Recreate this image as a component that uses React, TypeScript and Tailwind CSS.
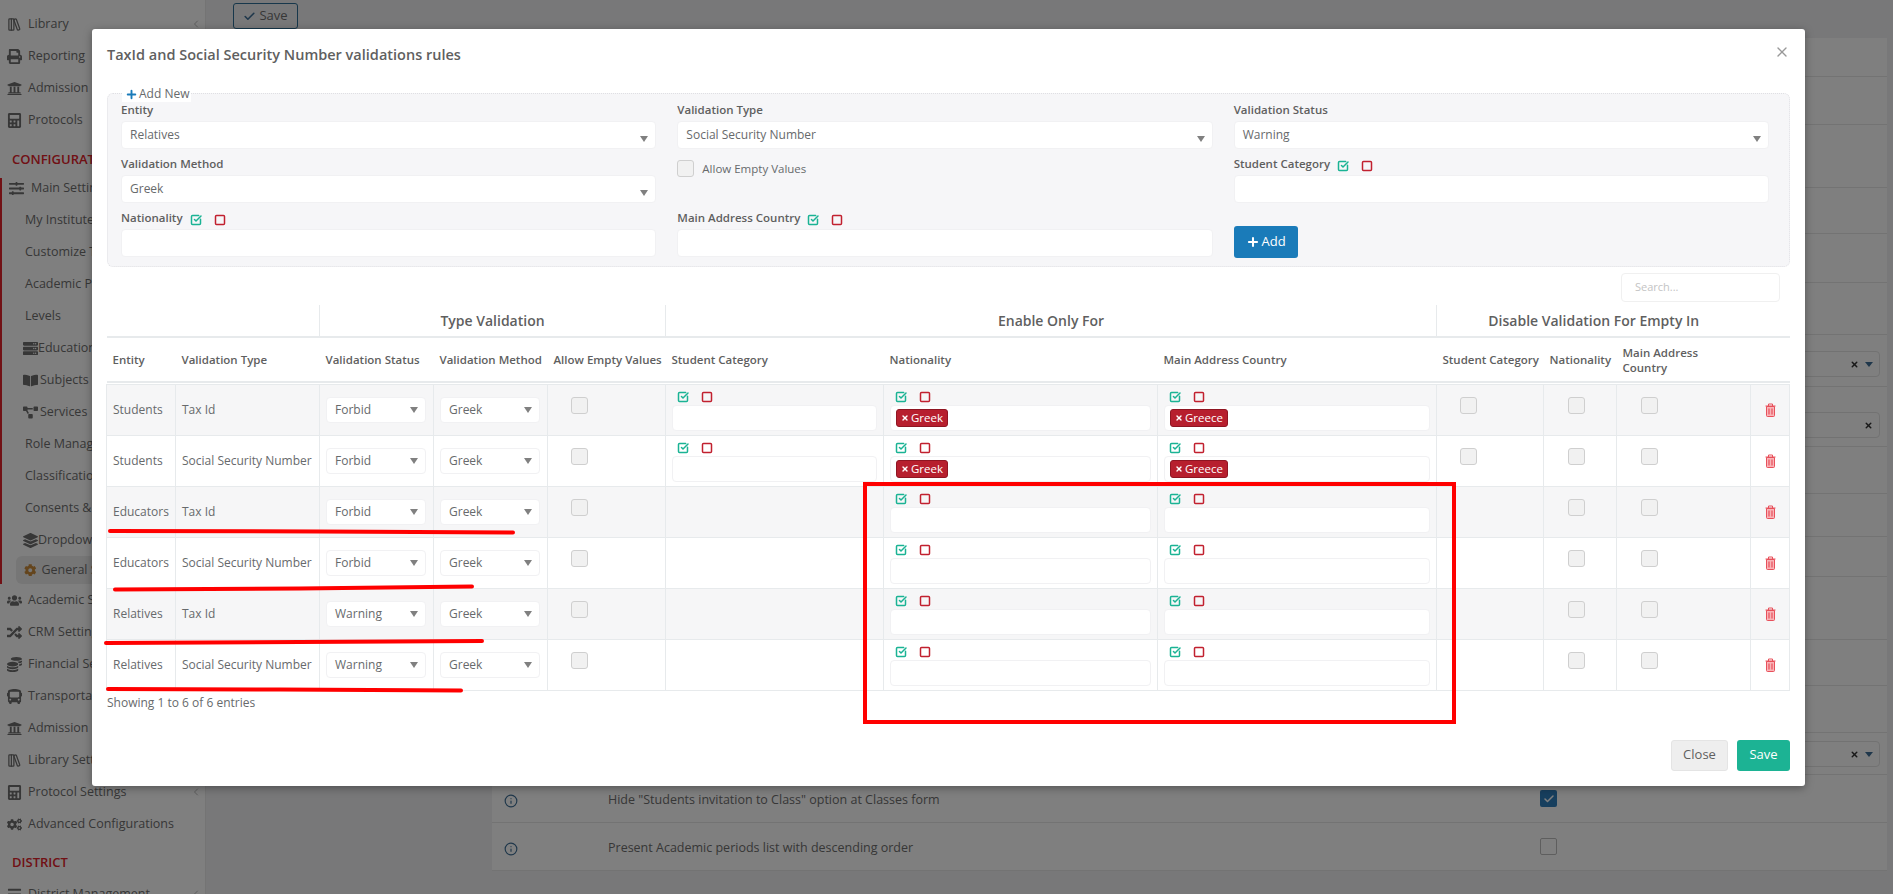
import type { ReactNode } from "react"
import { Check, Info, Plus, Square, SquareCheckBig, X, ChevronLeft } from "lucide-react"
import {
  FaBars,
  FaBookOpen,
  FaBus,
  FaCalculator,
  FaCog,
  FaCogs,
  FaCoins,
  FaLayerGroup,
  FaPrint,
  FaProjectDiagram,
  FaRandom,
  FaServer,
  FaSlidersH,
  FaUniversity,
  FaUsers,
} from "react-icons/fa"
import { LuLibraryBig } from "react-icons/lu"

type Rule = {
  entity: string
  type: string
  status: string
  category: boolean
  tags: boolean
}

const RULES: Rule[] = [
  { entity: "Students", type: "Tax Id", status: "Forbid", category: true, tags: true },
  { entity: "Students", type: "Social Security Number", status: "Forbid", category: true, tags: true },
  { entity: "Educators", type: "Tax Id", status: "Forbid", category: false, tags: false },
  { entity: "Educators", type: "Social Security Number", status: "Forbid", category: false, tags: false },
  { entity: "Relatives", type: "Tax Id", status: "Warning", category: false, tags: false },
  { entity: "Relatives", type: "Social Security Number", status: "Warning", category: false, tags: false },
]

// row heights of the settings page behind the dialog
const BACK_ROWS = [39, 48, 63, 46, 49, 52, 52, 60, 47, 43, 40, 63, 46, 47, 42, 48, 48]

function SelectBox({ value, className, caretClass = "" }: { value?: string; className: string; caretClass?: string }) {
  return (
    <div className={`flex items-center justify-between rounded-[4px] border border-[#f1f1f3] bg-white pl-[8px] pr-[7px] text-[12px] text-[#676a6c] ${className}`}>
      <span>{value}</span>
      <span className={`h-0 w-0 shrink-0 border-x-[4px] border-t-[6px] border-x-transparent border-t-[#808080] ${caretClass}`} />
    </div>
  )
}

function Toggles({ className = "" }: { className?: string }) {
  return (
    <span className={`flex items-start gap-[12px] ${className}`}>
      <SquareCheckBig size={12} strokeWidth={3} className="text-[#1ab394]" />
      <Square size={12} strokeWidth={3} className="text-[#c1202f]" />
    </span>
  )
}

function CheckBox({ className = "" }: { className?: string }) {
  return <span className={`block h-[17px] w-[17px] rounded-[3px] border border-[#cfcfcf] bg-[#f1f1f1] ${className}`} />
}

function Field({ label, toggles, children }: { label: string; toggles?: boolean; children: ReactNode }) {
  return (
    <div>
      <div className="flex h-[26px] items-end gap-[7px] pb-[4px] text-[11.5px] font-semibold leading-[14px] text-[#5f5f5f]">
        <span>{label}</span>
        {toggles && <Toggles className="mb-[-1px]" />}
      </div>
      {children}
    </div>
  )
}

function Tag({ text }: { text: string }) {
  return (
    <span className="ml-[5px] flex h-[18px] items-center gap-[2px] self-center rounded-[3px] border border-[#8f1522] bg-[#b71f2e] px-[4px] text-[11.5px] leading-none text-white">
      <X size={8} strokeWidth={4} />
      {text}
    </span>
  )
}

function TagInput({ tag }: { tag?: string }) {
  return <div className="flex h-[26px] rounded-[4px] border border-[#f1f1f3] bg-white">{tag && <Tag text={tag} />}</div>
}

function Trash() {
  return (
    <svg width="11" height="14" viewBox="0 0 11 14" className="mx-auto">
      <path d="M1.5 3.5h8v9a1 1 0 0 1-1 1h-6a1 1 0 0 1-1-1z" fill="#f9b4b8" stroke="#e8505b" />
      <path d="M0.5 3h10M3.5 3V1h4v2" fill="none" stroke="#e8505b" />
      <path d="M4 5.5v6M7 5.5v6" stroke="#e8505b" strokeWidth="1.2" />
    </svg>
  )
}

function SideItem({
  icon,
  label,
  className = "h-[32px] pl-[6px]",
  textClass = "ml-[6px]",
  chevron,
}: {
  icon?: ReactNode
  label: string
  className?: string
  textClass?: string
  chevron?: boolean
}) {
  return (
    <div className={`flex items-center whitespace-nowrap text-[12.5px] text-[#6e6e6e] ${className}`}>
      {icon && <span className="flex w-[16px] justify-center text-[15px]">{icon}</span>}
      <span className={textClass}>{label}</span>
      {chevron && <ChevronLeft size={12} className="ml-auto mr-[3px] text-[#bbbbbb]" />}
    </div>
  )
}

function Sidebar() {
  return (
    <aside className="h-full w-[206px] shrink-0 overflow-hidden border-r border-[#e8e8e8] bg-white pt-[8px]">
      <SideItem icon={<LuLibraryBig />} label="Library" chevron />
      <SideItem icon={<FaPrint />} label="Reporting" />
      <SideItem icon={<FaUniversity />} label="Admission" />
      <SideItem icon={<FaCalculator />} label="Protocols" />
      <div className="flex h-[42px] items-end pb-[9px] pl-[12px] text-[13px] font-semibold text-[#e2222a]">CONFIGURATION</div>
      <div className="border-l-2 border-[#e2222a]">
        <SideItem icon={<FaSlidersH />} label="Main Settings" className="h-[26px] pb-[6px] pl-[6px]" textClass="ml-[7px]" />
        <SideItem label="My Institute" className="h-[32px] pl-[23px]" textClass="" />
        <SideItem label="Customize Themes" className="h-[32px] pl-[23px]" textClass="" />
        <SideItem label="Academic Periods" className="h-[32px] pl-[23px]" textClass="" />
        <SideItem label="Levels" className="h-[32px] pl-[23px]" textClass="" />
        <SideItem icon={<FaServer />} label="Education" className="h-[32px] pl-[20px]" textClass="ml-[0px]" />
        <SideItem icon={<FaBookOpen />} label="Subjects" className="h-[32px] pl-[20px]" textClass="ml-[2px]" />
        <SideItem icon={<FaProjectDiagram />} label="Services" className="h-[32px] pl-[20px]" textClass="ml-[2px]" />
        <SideItem label="Role Management" className="h-[32px] pl-[23px]" textClass="" />
        <SideItem label="Classifications" className="h-[32px] pl-[23px]" textClass="" />
        <SideItem label="Consents & Terms" className="h-[32px] pl-[23px]" textClass="" />
        <SideItem icon={<FaLayerGroup />} label="Dropdown Lists" className="h-[32px] pl-[20px]" textClass="ml-[0px]" />
        <div className="ml-[14px] flex h-[28px] items-center gap-[5px] rounded-[6px] bg-[#ececec] pl-[8px] text-[12.5px] text-[#6e6e6e]">
          <FaCog className="text-[#c98a3a]" />
          General Settings
        </div>
      </div>
      <SideItem icon={<FaUsers />} label="Academic Settings" />
      <SideItem icon={<FaRandom />} label="CRM Settings" />
      <SideItem icon={<FaCoins />} label="Financial Settings" />
      <SideItem icon={<FaBus />} label="Transportation" />
      <SideItem icon={<FaUniversity />} label="Admission" />
      <SideItem icon={<LuLibraryBig />} label="Library Settings" />
      <SideItem icon={<FaCalculator />} label="Protocol Settings" chevron />
      <SideItem icon={<FaCogs />} label="Advanced Configurations" />
      <div className="flex h-[38px] items-end pb-[6px] pl-[12px] text-[13px] font-semibold text-[#e2222a]">DISTRICT</div>
      <SideItem icon={<FaBars />} label="District Management" chevron />
    </aside>
  )
}

function BackRow({ height, index }: { height: number; index: number }) {
  const text =
    index === 15 ? 'Hide "Students invitation to Class" option at Classes form' : index === 16 ? "Present Academic periods list with descending order" : ""
  const selectPad = index === 6 ? "mb-[9px]" : index === 7 ? "mb-[8px]" : index === 14 ? "mb-[7px]" : ""
  return (
    <div className="flex items-center border-b border-[#e6e6e6] bg-white text-[12.5px] text-[#6e6e6e]" style={{ height }}>
      {text && (
        <>
          <Info size={14} className="ml-[12px] mt-[4px] text-[#3f6f96]" />
          <span className="ml-[90px] mt-[4px] w-[932px]">{text}</span>
          {index === 15 ? (
            <span className="flex h-[17px] w-[17px] items-center justify-center rounded-[2px] bg-[#2f7fbd]">
              <Check size={12} strokeWidth={3} className="text-white" />
            </span>
          ) : (
            <span className="h-[17px] w-[17px] rounded-[2px] border border-[#bdbdbd]" />
          )}
        </>
      )}
      {selectPad && (
        <div className={`ml-auto mr-[7px] flex h-[26px] w-[220px] items-center justify-end gap-[6px] self-end rounded-[4px] border border-[#e4e4e4] pr-[6px] ${selectPad}`}>
          <X size={9} strokeWidth={4} className="text-[#333333]" />
          {index !== 7 && <span className="h-0 w-0 border-x-[4px] border-t-[5px] border-x-transparent border-t-[#3f6f96]" />}
        </div>
      )}
    </div>
  )
}

function BackPage() {
  return (
    <div className="flex h-full">
      <Sidebar />
      <main className="flex-1 bg-[#f0f1f3] pl-[27px]">
        <button className="mt-[3px] flex h-[26px] w-[65px] items-center justify-center gap-[3px] rounded-[3px] border border-[#2f6f96] text-[13px] text-[#6e6e6e]">
          <Check size={13} strokeWidth={3} className="text-[#3f6f96]" />
          Save
        </button>
        <div className="ml-[259px] mr-[6px] mt-[9px]">
          {BACK_ROWS.map((height, i) => (
            <BackRow key={i} height={height} index={i} />
          ))}
        </div>
      </main>
    </div>
  )
}

function RulesTable() {
  const cell = "border border-[#e7eaec] align-middle px-[6px]"
  const cols = ["w-[69px]", "w-[144px]", "w-[114px]", "w-[114px]", "w-[118px]", "w-[218px]", "w-[274px]", "w-[279px]", "w-[107px]", "w-[73px]", "w-[134px]", "w-[39px]"]
  return (
    <table className="ml-[-1px] mt-[3px] w-[1684px] table-fixed border-collapse text-[12px] text-[#676a6c]">
      <colgroup>
        {cols.map((c, i) => (
          <col key={i} className={c} />
        ))}
      </colgroup>
      <thead>
        <tr className="h-[32px] border-b-2 border-[#e7eaec] text-[14px] font-semibold text-[#5f5f5f]">
          <th colSpan={2} />
          <th colSpan={3} className="border-l border-[#e7eaec] font-semibold">Type Validation</th>
          <th colSpan={3} className="border-l border-[#e7eaec] font-semibold">Enable Only For</th>
          <th colSpan={3} className="border-l border-[#e7eaec] font-semibold">Disable Validation For Empty In</th>
          <th />
        </tr>
        <tr className="h-[45px] border-b-2 border-[#e7eaec] text-left text-[11.5px] text-[#5f5f5f] [&>th]:whitespace-nowrap [&>th]:px-[6px] [&>th]:font-semibold">
          <th>Entity</th>
          <th>Validation Type</th>
          <th>Validation Status</th>
          <th>Validation Method</th>
          <th>Allow Empty Values</th>
          <th>Student Category</th>
          <th>Nationality</th>
          <th>Main Address Country</th>
          <th>Student Category</th>
          <th>Nationality</th>
          <th className="leading-[15px]">
            Main Address
            <br />
            Country
          </th>
          <th />
        </tr>
        <tr className="h-[2px]" />
      </thead>
      <tbody>
        {RULES.map((r, i) => (
          <tr key={i} className={`h-[51px] ${i % 2 === 0 ? "bg-[#f6f6f7]" : "bg-white"}`}>
            <td className={cell}>{r.entity}</td>
            <td className={cell}>{r.type}</td>
            <td className={cell}>
              <SelectBox value={r.status} className="h-[26px] w-[100px]" />
            </td>
            <td className={cell}>
              <SelectBox value="Greek" className="h-[26px] w-[100px]" />
            </td>
            <td className={`${cell} align-top pl-[23px] pt-[12px]`}>
              <CheckBox />
            </td>
            <td className={`${cell} align-top pt-[5px]`}>
              {r.category && (
                <>
                  <Toggles className="ml-[5px] h-[15px] pt-[1px]" />
                  <TagInput />
                </>
              )}
            </td>
            <td className={`${cell} align-top pt-[5px]`}>
              <Toggles className="ml-[5px] h-[15px] pt-[1px]" />
              <TagInput tag={r.tags ? "Greek" : undefined} />
            </td>
            <td className={`${cell} align-top pt-[5px]`}>
              <Toggles className="ml-[5px] h-[15px] pt-[1px]" />
              <TagInput tag={r.tags ? "Greece" : undefined} />
            </td>
            <td className={`${cell} align-top pl-[23px] pt-[12px]`}>{r.category && <CheckBox />}</td>
            <td className={`${cell} align-top pl-[24px] pt-[12px]`}>
              <CheckBox />
            </td>
            <td className={`${cell} align-top pl-[24px] pt-[12px]`}>
              <CheckBox />
            </td>
            <td className={cell}>
              <Trash />
            </td>
          </tr>
        ))}
      </tbody>
    </table>
  )
}

function AddNewForm() {
  return (
    <div className="relative mt-[25px] h-[174px] rounded-[6px] border border-dotted border-[#dfdfe3] bg-[#f6f6f8] pl-[13px] pr-[20px] pt-[1px]">
      <span className="absolute left-[14px] top-[-8px] flex items-center gap-[1px] bg-white pl-[3px] pr-[2px] text-[12px] leading-[16px] text-[#676a6c]">
        <Plus size={13} strokeWidth={3.5} className="text-[#1a7bb9]" />
        Add New
      </span>
      <div className="grid grid-cols-3 gap-x-[21px]">
        <Field label="Entity">
          <SelectBox value="Relatives" className="h-[28px]" caretClass="mt-[8px]" />
        </Field>
        <Field label="Validation Type">
          <SelectBox value="Social Security Number" className="h-[28px]" caretClass="mt-[8px]" />
        </Field>
        <Field label="Validation Status">
          <SelectBox value="Warning" className="h-[28px]" caretClass="mt-[8px]" />
        </Field>
        <Field label="Validation Method">
          <SelectBox value="Greek" className="h-[28px]" caretClass="mt-[8px]" />
        </Field>
        <div className="flex items-start gap-[8px] pt-[11px] text-[11.5px] text-[#676a6c]">
          <CheckBox />
          <span className="leading-[17px]">Allow Empty Values</span>
        </div>
        <Field label="Student Category" toggles>
          <div className="h-[28px] rounded-[4px] border border-[#f1f1f3] bg-white" />
        </Field>
        <Field label="Nationality" toggles>
          <div className="h-[28px] rounded-[4px] border border-[#f1f1f3] bg-white" />
        </Field>
        <Field label="Main Address Country" toggles>
          <div className="h-[28px] rounded-[4px] border border-[#f1f1f3] bg-white" />
        </Field>
        <div className="flex items-end">
          <button className="mb-[-1px] flex h-[32px] w-[64px] items-center justify-center gap-[2px] rounded-[3px] bg-[#1a7bb9] text-[13px] text-white">
            <Plus size={14} strokeWidth={3.5} />
            Add
          </button>
        </div>
      </div>
    </div>
  )
}

function Annotations() {
  return (
    <svg viewBox="0 0 1893 894" className="pointer-events-none absolute inset-0 h-full w-full">
      <g fill="none" stroke="#ff0000" strokeWidth="4" strokeLinecap="round" strokeLinejoin="round">
        <path d="M110 531 L320 531.5 L513 532.5" />
        <path d="M115 589.5 L300 588.5 L472 586.5" />
        <path d="M106 643 L300 642 L482 641" />
        <path d="M108 689 L280 689.5 L461 690.5" />
        <rect x="865" y="484" width="589" height="238" strokeLinecap="butt" strokeLinejoin="miter" />
      </g>
    </svg>
  )
}

export default function App() {
  return (
    <div className="relative h-[894px] w-[1893px] overflow-hidden font-['Open_Sans',sans-serif]">
      <BackPage />
      <div className="absolute inset-0 bg-black/50" />
      <div className="absolute left-[92px] top-[29px] h-[757px] w-[1713px] rounded-[3px] bg-white px-[15px] shadow-[0_2px_8px_rgba(0,0,0,0.35)]">
        <div className="flex h-[39px] items-end justify-between">
          <h4 className="mb-[3px] text-[14.5px] font-semibold leading-[20px] text-[#5f5f5f]">TaxId and Social Security Number validations rules</h4>
          <X size={16} className="mb-[8px] text-[#999999]" />
        </div>
        <AddNewForm />
        <div className="mt-[6px] flex justify-end pr-[10px]">
          <div className="flex h-[29px] w-[159px] items-center rounded-[4px] border border-[#f0f0f0] pl-[13px] text-[11px] text-[#c4c4c4]">Search...</div>
        </div>
        <RulesTable />
        <p className="mt-[3px] text-[12px] leading-[18px] text-[#676a6c]">Showing 1 to 6 of 6 entries</p>
        <div className="mt-[28px] flex justify-end gap-[9px]">
          <button className="h-[31px] w-[57px] rounded-[3px] border border-[#e4e4e4] bg-[#eeeeee] text-[13px] text-[#5f5f5f]">Close</button>
          <button className="h-[31px] w-[53px] rounded-[3px] bg-[#1cb394] text-[13px] text-white">Save</button>
        </div>
      </div>
      <Annotations />
    </div>
  )
}
